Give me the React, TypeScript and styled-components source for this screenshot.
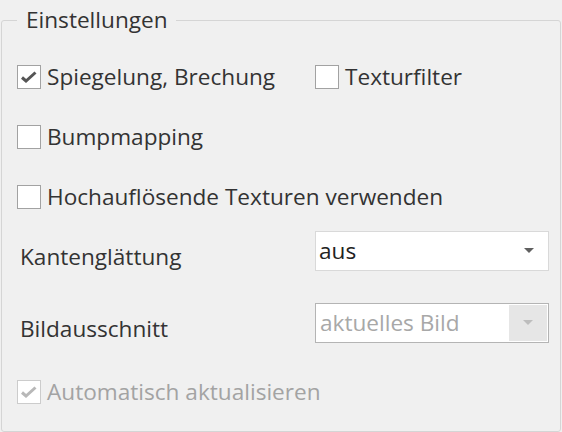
import React from 'react';
import styled, { createGlobalStyle } from 'styled-components';

const GlobalStyle = createGlobalStyle`
  html, body {
    margin: 0;
    padding: 0;
    background: #f0f0f0;
  }
  body {
    width: 562px;
    height: 432px;
    overflow: hidden;
    font-family: 'Open Sans', 'Noto Sans', sans-serif;
    color: #333333;
  }
`;

const Page = styled.div`
  width: 562px;
  height: 432px;
  padding: 6px 1px 0 1px;
  box-sizing: border-box;
`;

const Group = styled.fieldset`
  margin: 0;
  padding: 0 10px 0 15px;
  height: 426px;
  box-sizing: border-box;
  border: 1px solid #d5d5d5;
  border-radius: 3px;
  min-width: 0;
`;

const Legend = styled.legend`
  padding: 0 8px 0 9px;
  font-size: 22.6px;
  line-height: 28px;
  color: #333333;
`;

const Body = styled.div`
  display: flex;
  flex-direction: column;
`;

const Row = styled.div<{ $top: number; $h: number }>`
  display: grid;
  grid-template-columns: 298px 1fr;
  align-items: center;
  height: ${(p) => p.$h}px;
  margin-top: ${(p) => p.$top}px;
`;

const CheckLabel = styled.label<{ $disabled?: boolean }>`
  display: flex;
  align-items: center;
  gap: 6px;
  font-size: 22.6px;
  white-space: nowrap;
  color: ${(p) => (p.$disabled ? '#a3a3a3' : '#333333')};
`;

const Box = styled.span<{ $disabled?: boolean }>`
  display: flex;
  align-items: center;
  justify-content: center;
  width: 24px;
  height: 24px;
  box-sizing: border-box;
  flex: none;
  border: 1px solid ${(p) => (p.$disabled ? '#cccccc' : '#a2a2a2')};
  background: #ffffff;
`;

const FieldLabel = styled.span`
  font-size: 22.6px;
  padding-left: 3px;
  padding-top: 12px;
  color: #333333;
`;

const Combo = styled.div<{ $disabled?: boolean }>`
  display: flex;
  align-items: stretch;
  width: 234px;
  height: 40px;
  box-sizing: border-box;
  background: #ffffff;
  border: 1px solid ${(p) => (p.$disabled ? '#b4b4b4' : '#d9d9d9')};
  padding: ${(p) => (p.$disabled ? '1px' : '0')};
`;

const ComboText = styled.span<{ $disabled?: boolean }>`
  flex: 1;
  display: flex;
  align-items: center;
  padding-left: 3px;
  font-size: 22.6px;
  color: ${(p) => (p.$disabled ? '#a8a8a8' : '#222222')};
`;

const ComboButton = styled.span<{ $disabled?: boolean }>`
  width: 38px;
  display: flex;
  align-items: center;
  justify-content: center;
  background: ${(p) => (p.$disabled ? '#e6e6e6' : 'transparent')};
`;

const Check = ({ color }: { color: string }) => (
  <svg width="18" height="14" viewBox="0 0 18 14">
    <path d="M2 7.5 L6 11 L15.5 2.5" fill="none" stroke={color} strokeWidth="3" />
  </svg>
);

const Arrow = ({ color }: { color: string }) => (
  <svg width="10" height="5" viewBox="0 0 10 5">
    <path d="M0 0 H10 L5 5 Z" fill={color} />
  </svg>
);

function Checkbox({ label, checked, disabled }: { label: string; checked?: boolean; disabled?: boolean }) {
  return (
    <CheckLabel $disabled={disabled}>
      <Box $disabled={disabled}>{checked && <Check color={disabled ? '#b8b8b8' : '#555555'} />}</Box>
      {label}
    </CheckLabel>
  );
}

function Select({ value, disabled }: { value: string; disabled?: boolean }) {
  return (
    <Combo $disabled={disabled}>
      <ComboText $disabled={disabled}>{value}</ComboText>
      <ComboButton $disabled={disabled}>
        <Arrow color={disabled ? '#bdbdbd' : '#606060'} />
      </ComboButton>
    </Combo>
  );
}

export default function App() {
  return (
    <>
      <GlobalStyle />
      <Page>
        <Group>
          <Legend>Einstellungen</Legend>
          <Body>
            <Row $top={27} $h={24}>
              <Checkbox label="Spiegelung, Brechung" checked />
              <Checkbox label="Texturfilter" />
            </Row>
            <Row $top={36} $h={24}>
              <Checkbox label="Bumpmapping" />
            </Row>
            <Row $top={36} $h={24}>
              <Checkbox label="Hochauflösende Texturen verwenden" />
            </Row>
            <Row $top={24} $h={40}>
              <FieldLabel>Kantenglättung</FieldLabel>
              <Select value="aus" />
            </Row>
            <Row $top={32} $h={40}>
              <FieldLabel>Bildausschnitt</FieldLabel>
              <Select value="aktuelles Bild" disabled />
            </Row>
            <Row $top={35} $h={24}>
              <Checkbox label="Automatisch aktualisieren" checked disabled />
            </Row>
          </Body>
        </Group>
      </Page>
    </>
  );
}
